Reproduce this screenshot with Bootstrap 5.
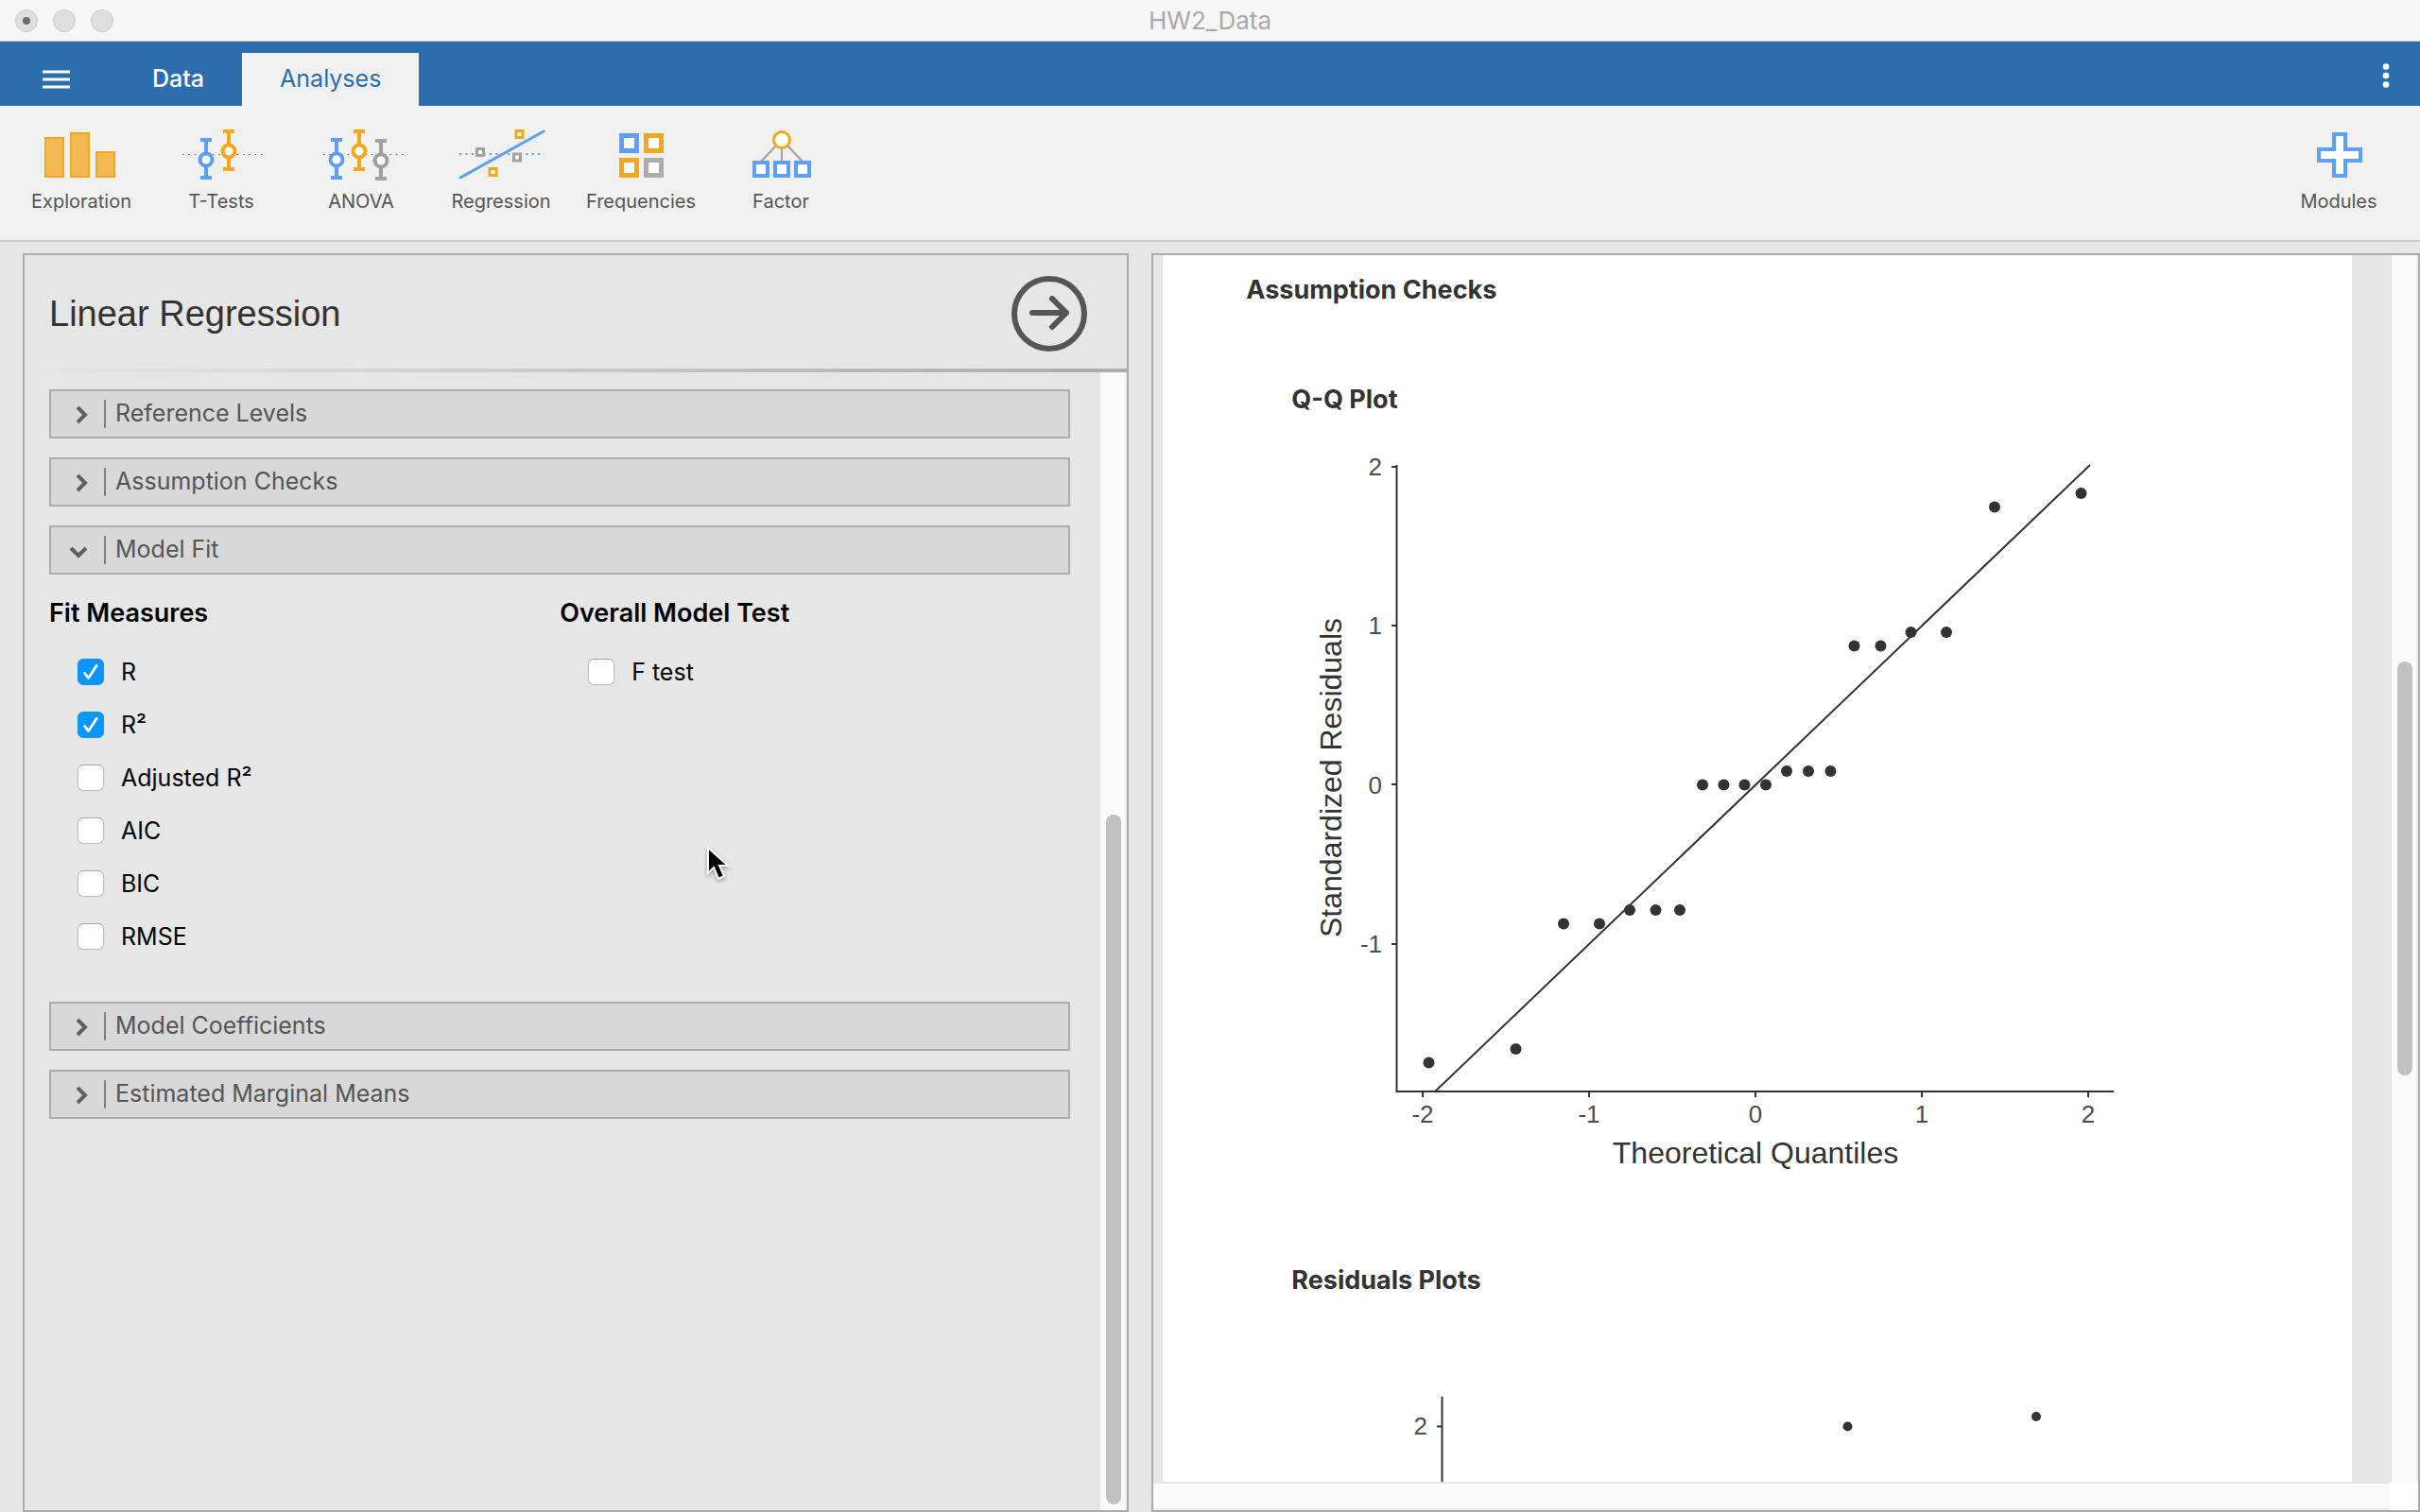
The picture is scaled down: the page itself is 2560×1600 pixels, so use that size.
<!DOCTYPE html>
<html lang="en">
<head>
<meta charset="utf-8">
<meta name="viewport" content="width=device-width, initial-scale=1">
<title>HW2_Data</title>
<link rel="stylesheet" href="https://cdn.jsdelivr.net/npm/bootstrap@5.3.0/dist/css/bootstrap.min.css">
<style>
body{font-family:Inter,"Liberation Sans",sans-serif;font-size:25px;line-height:32px;background:#e6e6e6;color:#000}
button{color:inherit;font:inherit}
.plain{background:none;border:0;padding:0}
.titlebar{height:44px;background:#f6f6f6;border-bottom:1px solid #cfcfcf;color:#a9a9a9;font-size:26px;padding:0 16px}
.dots{gap:16px;flex:1 1 0}
.dot{width:24px;height:24px;border-radius:50%;background:#dedede;border:1px solid #cbcbcb}
.dot.shut::after{content:"";width:8px;height:8px;border-radius:50%;background:#6a6a6a}
.tabbar{height:68px;background:#2c6dae;color:#fff;padding:12px 32px 0 45px}
.tabbar .tab{height:56px;padding:0 40px 2px}
.tabbar .idle{font-weight:500}
.tab.current{background:#f0f0f0;color:#2c6dae}
.burger{margin-right:47px}
.ribbon{height:144px;background:#f0f0f0;border-bottom:2px solid #cdcdcd;padding:16px 12px 0;color:#555;font-size:20px;line-height:26px}
.tool{width:148px}
.tool svg{height:72px;width:100px}
.work{padding:12px 0 0 24px;gap:24px;min-height:0}
.options{flex:1170 1 0;border:2px solid #ababab}
.results{flex:1342 1 0;border:2px solid #ababab;background:#e7e7e7}
.opthead{height:120px;padding:3px 40px 0 26px}
.opthead h1{font:38px/48px "Liberation Sans",sans-serif;color:#333}
.rule{height:4px;background:linear-gradient(90deg,#e6e6e6,#ababab)}
.optbody{padding:18px 32px 0 26px}
.fold{display:flex;align-items:center;width:100%;height:52px;background:#d8d8d8;border:2px solid #adadad;color:#555;padding:0 16px;margin-bottom:20px;text-align:left}
.fold svg{width:36px;height:30px}
.fold span{border-left:2px solid #808080;padding:0 0 2px 10px;line-height:28px;margin-left:4px}
.group{padding:0 0 41px}
.group h2{font-size:27px;line-height:32px;font-weight:600;margin:5px 0 18px}
.opt{min-height:56px;padding:0 0 0 30px;margin:0;display:flex;align-items:center;gap:18px}
.opt .form-check-input{width:28px;height:28px;margin:0;float:none;border:1px solid #b9b9b9;border-top-color:#a0a0a0;border-radius:6px;background-color:#fff}
.opt .form-check-input:checked{background-color:#0a95ff;border-color:#0a95ff;background-image:url("data:image/svg+xml,%3Csvg xmlns='http://www.w3.org/2000/svg' viewBox='0 0 28 28'%3E%3Cpath d='M7 15.500l4.500 5.500L20.500 7' fill='none' stroke='%23fff' stroke-width='3' stroke-linecap='round' stroke-linejoin='round'/%3E%3C/svg%3E")}
.track{width:28px;background:#fafafa;border-right:2px solid #ededed;padding-left:6px}
.thumb{width:16px;border-radius:8px;background:#c1c1c1}
.thumb.low{height:730px;margin:auto 0 6px}
.thumb.mid{height:438px;margin-top:430px}
.sheet{margin-left:10px;margin-right:42px;background:#fff;color:#333;overflow:hidden}
.sheet h2,.sheet h3{font-size:27px;line-height:32px;font-weight:700;margin:0}
.sheet h2{padding:21px 0 0 88px}
.sheet h3{padding:84px 0 0 136px}
.sheet h3.second{padding-top:100px}
.sheet svg{display:block}
.ax{font:26px "Liberation Sans",sans-serif;fill:#4d4d4d}
.axt{font:32px "Liberation Sans",sans-serif;fill:#333}
.hbar{height:30px;background:#fafafa;border-top:2px solid #e7e7e7;border-bottom:2px solid #ededed}
.corner{width:30px;background:#fff}
.pane{min-height:0}
.pointer{position:absolute;left:746px;top:894px;width:30px;height:44px;filter:drop-shadow(0 2px 2px #0005)}
</style>
<script src="https://cdn.jsdelivr.net/npm/bootstrap@5.3.0/dist/js/bootstrap.bundle.min.js"></script>
</head>
<body class="vh-100 d-flex flex-column overflow-hidden">
<header class="flex-shrink-0">
  <div class="titlebar d-flex align-items-center">
    <div class="dots d-flex">
      <span class="dot shut d-flex align-items-center justify-content-center"></span><span class="dot"></span><span class="dot"></span>
    </div>
    <div>HW2_Data</div>
    <div class="dots"></div>
  </div>
  <nav class="tabbar d-flex align-items-center">
    <button class="plain burger d-flex" aria-label="Menu"><svg width="29" height="20" viewBox="0 0 29 20"><path d="M0 2h29M0 10h29M0 18h29" stroke="#fff" stroke-width="3"/></svg></button>
    <button class="plain tab idle">Data</button>
    <button class="plain tab current">Analyses</button>
    <button class="plain ms-auto d-flex" aria-label="More"><svg width="8" height="36" viewBox="0 0 8 36" fill="#fff"><circle cx="4" cy="4.500" r="3.300"/><circle cx="4" cy="14" r="3.300"/><circle cx="4" cy="23.500" r="3.300"/></svg></button>
  </nav>
</header>
<div class="ribbon d-flex align-items-start flex-shrink-0">
  <button class="plain tool d-flex flex-column align-items-center"><svg viewBox="0 0 100 72"><g fill="#f3b952" stroke="#f2a818" stroke-width="2"><path d="M12 18h19v41H12zM39 13h19v46H39zM66 33h19v26H66z"/></g></svg>Exploration</button>
  <button class="plain tool d-flex flex-column align-items-center"><svg viewBox="0 0 100 72" fill="none"><path d="M9 35.500h86" stroke="#3a78b8" stroke-dasharray="1.500 4.900"/><g stroke="#5d9ff0" stroke-width="4"><path d="M28 20h12M34 20v40M28 60h12"/><circle cx="34" cy="41" r="6.500" fill="#fff"/></g><g stroke="#f2a818" stroke-width="4"><path d="M52 11h12M58 11v40M52 51h12"/><circle cx="58" cy="32" r="6.500" fill="#fff"/></g></svg>T-Tests</button>
  <button class="plain tool d-flex flex-column align-items-center"><svg viewBox="0 0 100 72" fill="none"><path d="M10 35.500h86" stroke="#3a78b8" stroke-dasharray="1.500 4.900"/><g stroke="#5d9ff0" stroke-width="4"><path d="M18 20h12M24 20v40M18 60h12"/><circle cx="24" cy="41" r="6.500" fill="#fff"/></g><g stroke="#f2a818" stroke-width="4"><path d="M42 11h12M48 11v40M42 51h12"/><circle cx="48" cy="32" r="6.500" fill="#fff"/></g><g stroke="#a0a0a0" stroke-width="4"><path d="M65 21h12M71 21v40M65 61h12"/><circle cx="71" cy="42" r="6.500" fill="#fff"/></g></svg>ANOVA</button>
  <button class="plain tool d-flex flex-column align-items-center"><svg viewBox="0 0 100 72" fill="none"><path d="M6 35h90" stroke="#6a9bd0" stroke-width="2" stroke-dasharray="2 4.400"/><path d="M7 60L95 11" stroke="#5d9ff0" stroke-width="3" stroke-linecap="round"/><g fill="#fff" stroke-width="3"><path d="M24.500 29.500h7v7h-7zM63.500 35h7v7h-7z" stroke="#a0a0a0"/><path d="M66 10.500h7v7h-7zM38 50.500h7v7h-7z" stroke="#f2a818"/></g></svg>Regression</button>
  <button class="plain tool d-flex flex-column align-items-center"><svg viewBox="0 0 100 72"><g fill="#fff" stroke-width="5"><path d="M29.500 15.500h16v16h-16z" stroke="#5d9ff0"/><path d="M55.500 15.500h16v16h-16zM29.500 41.500h16v16h-16z" stroke="#f2a818"/><path d="M55.500 41.500h16v16h-16z" stroke="#acacac"/></g></svg>Frequencies</button>
  <button class="plain tool d-flex flex-column align-items-center"><svg viewBox="0 0 100 72" fill="#fff"><path d="M45 26L29 43M51 28v15M57 26l16 17" stroke="#a0a0a0" stroke-width="2"/><circle cx="51" cy="20" r="8.500" stroke="#f2a818" stroke-width="3"/><g stroke="#5d9ff0" stroke-width="4"><path d="M22 44h14v14H22zM44 44h14v14H44zM66 44h14v14H66z"/></g></svg>Factor</button>
  <button class="plain tool d-flex flex-column align-items-center ms-auto"><svg viewBox="0 0 100 72"><path d="M45 14h12v16h16v12H57v16H45V42H29V30h16z" fill="#fff" stroke="#5d9ff0" stroke-width="4"/></svg>Modules</button>
</div>
<main class="work d-flex flex-grow-1">
  <section class="options d-flex flex-column">
    <div class="opthead d-flex align-items-center justify-content-between">
      <h1 class="m-0">Linear Regression</h1>
      <button class="plain d-flex" aria-label="Close options"><svg width="84" height="84" viewBox="0 1 84 84" fill="none" stroke="#555" stroke-width="6"><circle cx="42" cy="43" r="37"/><path d="M24 42h36M45 27l15 15l-15 15" stroke-linecap="round" stroke-linejoin="round"/></svg></button>
    </div>
    <div class="rule"></div>
    <div class="pane d-flex flex-grow-1">
      <div class="optbody flex-grow-1">
        <button class="fold"><svg viewBox="0 0 36 30"><path d="M12 8l8 8-8 8" fill="none" stroke="#606060" stroke-width="4"/></svg><span>Reference Levels</span></button>
        <button class="fold"><svg viewBox="0 0 36 30"><path d="M12 8l8 8-8 8" fill="none" stroke="#606060" stroke-width="4"/></svg><span>Assumption Checks</span></button>
        <button class="fold"><svg viewBox="0 0 36 30"><path d="M5 13l8 8 8-8" fill="none" stroke="#606060" stroke-width="4"/></svg><span>Model Fit</span></button>
        <div class="group row gx-0">
          <div class="col-6">
            <h2>Fit Measures</h2>
            <label class="opt"><input class="form-check-input" type="checkbox" checked>R</label>
            <label class="opt"><input class="form-check-input" type="checkbox" checked>R²</label>
            <label class="opt"><input class="form-check-input" type="checkbox">Adjusted R²</label>
            <label class="opt"><input class="form-check-input" type="checkbox">AIC</label>
            <label class="opt"><input class="form-check-input" type="checkbox">BIC</label>
            <label class="opt"><input class="form-check-input" type="checkbox">RMSE</label>
          </div>
          <div class="col-6">
            <h2>Overall Model Test</h2>
            <label class="opt"><input class="form-check-input" type="checkbox">F test</label>
          </div>
        </div>
        <button class="fold"><svg viewBox="0 0 36 30"><path d="M12 8l8 8-8 8" fill="none" stroke="#606060" stroke-width="4"/></svg><span>Model Coefficients</span></button>
        <button class="fold"><svg viewBox="0 0 36 30"><path d="M12 8l8 8-8 8" fill="none" stroke="#606060" stroke-width="4"/></svg><span>Estimated Marginal Means</span></button>
      </div>
      <div class="track d-flex flex-column"><div class="thumb low"></div></div>
    </div>
  </section>
  <section class="results d-flex flex-column">
    <div class="pane d-flex flex-grow-1 overflow-hidden">
      <div class="sheet flex-grow-1">
        <h2>Assumption Checks</h2>
        <h3>Q-Q Plot</h3>
        <svg width="1040" height="800" viewBox="1230 439 1040 800" role="img" aria-label="Q-Q plot">
          <g stroke="#333" stroke-width="2" fill="none"><path d="M1477.500 492V1155H2236M1472 494h5M1472 662h5M1472 830h5M1472 999h5M1505 1155v6M1681 1155v6M1857 1155v6M2033 1155v6M2209 1155v6M1518 1155L2211 492"/></g>
          <g fill="#333"><circle cx="1511.500" cy="1124.500" r="6"/><circle cx="1603.500" cy="1110" r="6"/><circle cx="1654" cy="977.500" r="6"/><circle cx="1692" cy="977.500" r="6"/><circle cx="1724" cy="963" r="6"/><circle cx="1751.500" cy="963" r="6"/><circle cx="1777" cy="963" r="6"/><circle cx="1801" cy="830.500" r="6"/><circle cx="1823.500" cy="830.500" r="6"/><circle cx="1845.500" cy="830.500" r="6"/><circle cx="1868" cy="830.500" r="6"/><circle cx="1890" cy="816" r="6"/><circle cx="1913" cy="816" r="6"/><circle cx="1936.500" cy="816" r="6"/><circle cx="1961.500" cy="683.500" r="6"/><circle cx="1989.500" cy="683.500" r="6"/><circle cx="2021.500" cy="669" r="6"/><circle cx="2059" cy="669" r="6"/><circle cx="2110" cy="536.500" r="6"/><circle cx="2201.500" cy="522" r="6"/></g>
          <g class="ax" text-anchor="end"><text x="1462" y="503">2</text><text x="1462" y="671">1</text><text x="1462" y="840">0</text><text x="1462" y="1008">-1</text></g>
          <g class="ax" text-anchor="middle"><text x="1505" y="1188">-2</text><text x="1681" y="1188">-1</text><text x="1857" y="1188">0</text><text x="2033" y="1188">1</text><text x="2209" y="1188">2</text></g>
          <g class="axt" text-anchor="middle"><text x="1857" y="1231">Theoretical Quantiles</text><text transform="translate(1419 823) rotate(-90)">Standardized Residuals</text></g>
        </svg>
        <h3 class="second">Residuals Plots</h3>
        <svg width="1040" height="210" viewBox="1230 1371 1040 210" role="img" aria-label="Residuals plot">
          <path d="M1525.500 1478V1600M1520 1509.500h5" stroke="#333" stroke-width="2"/>
          <circle cx="1954.500" cy="1509.500" r="5" fill="#333"/><circle cx="2154" cy="1499" r="5" fill="#333"/>
          <text class="ax" x="1510" y="1518" text-anchor="end">2</text>
        </svg>
      </div>
      <div class="track d-flex flex-column"><div class="thumb mid"></div></div>
    </div>
    <div class="d-flex flex-shrink-0"><div class="hbar flex-grow-1"></div><div class="corner"></div></div>
  </section>
</main>
<svg class="pointer" viewBox="0 0 30 44"><path d="M3 3v27l6-6 5 12 6-3-5-11h9z" fill="#000" stroke="#fff" stroke-width="2"/></svg>
</body>
</html>
